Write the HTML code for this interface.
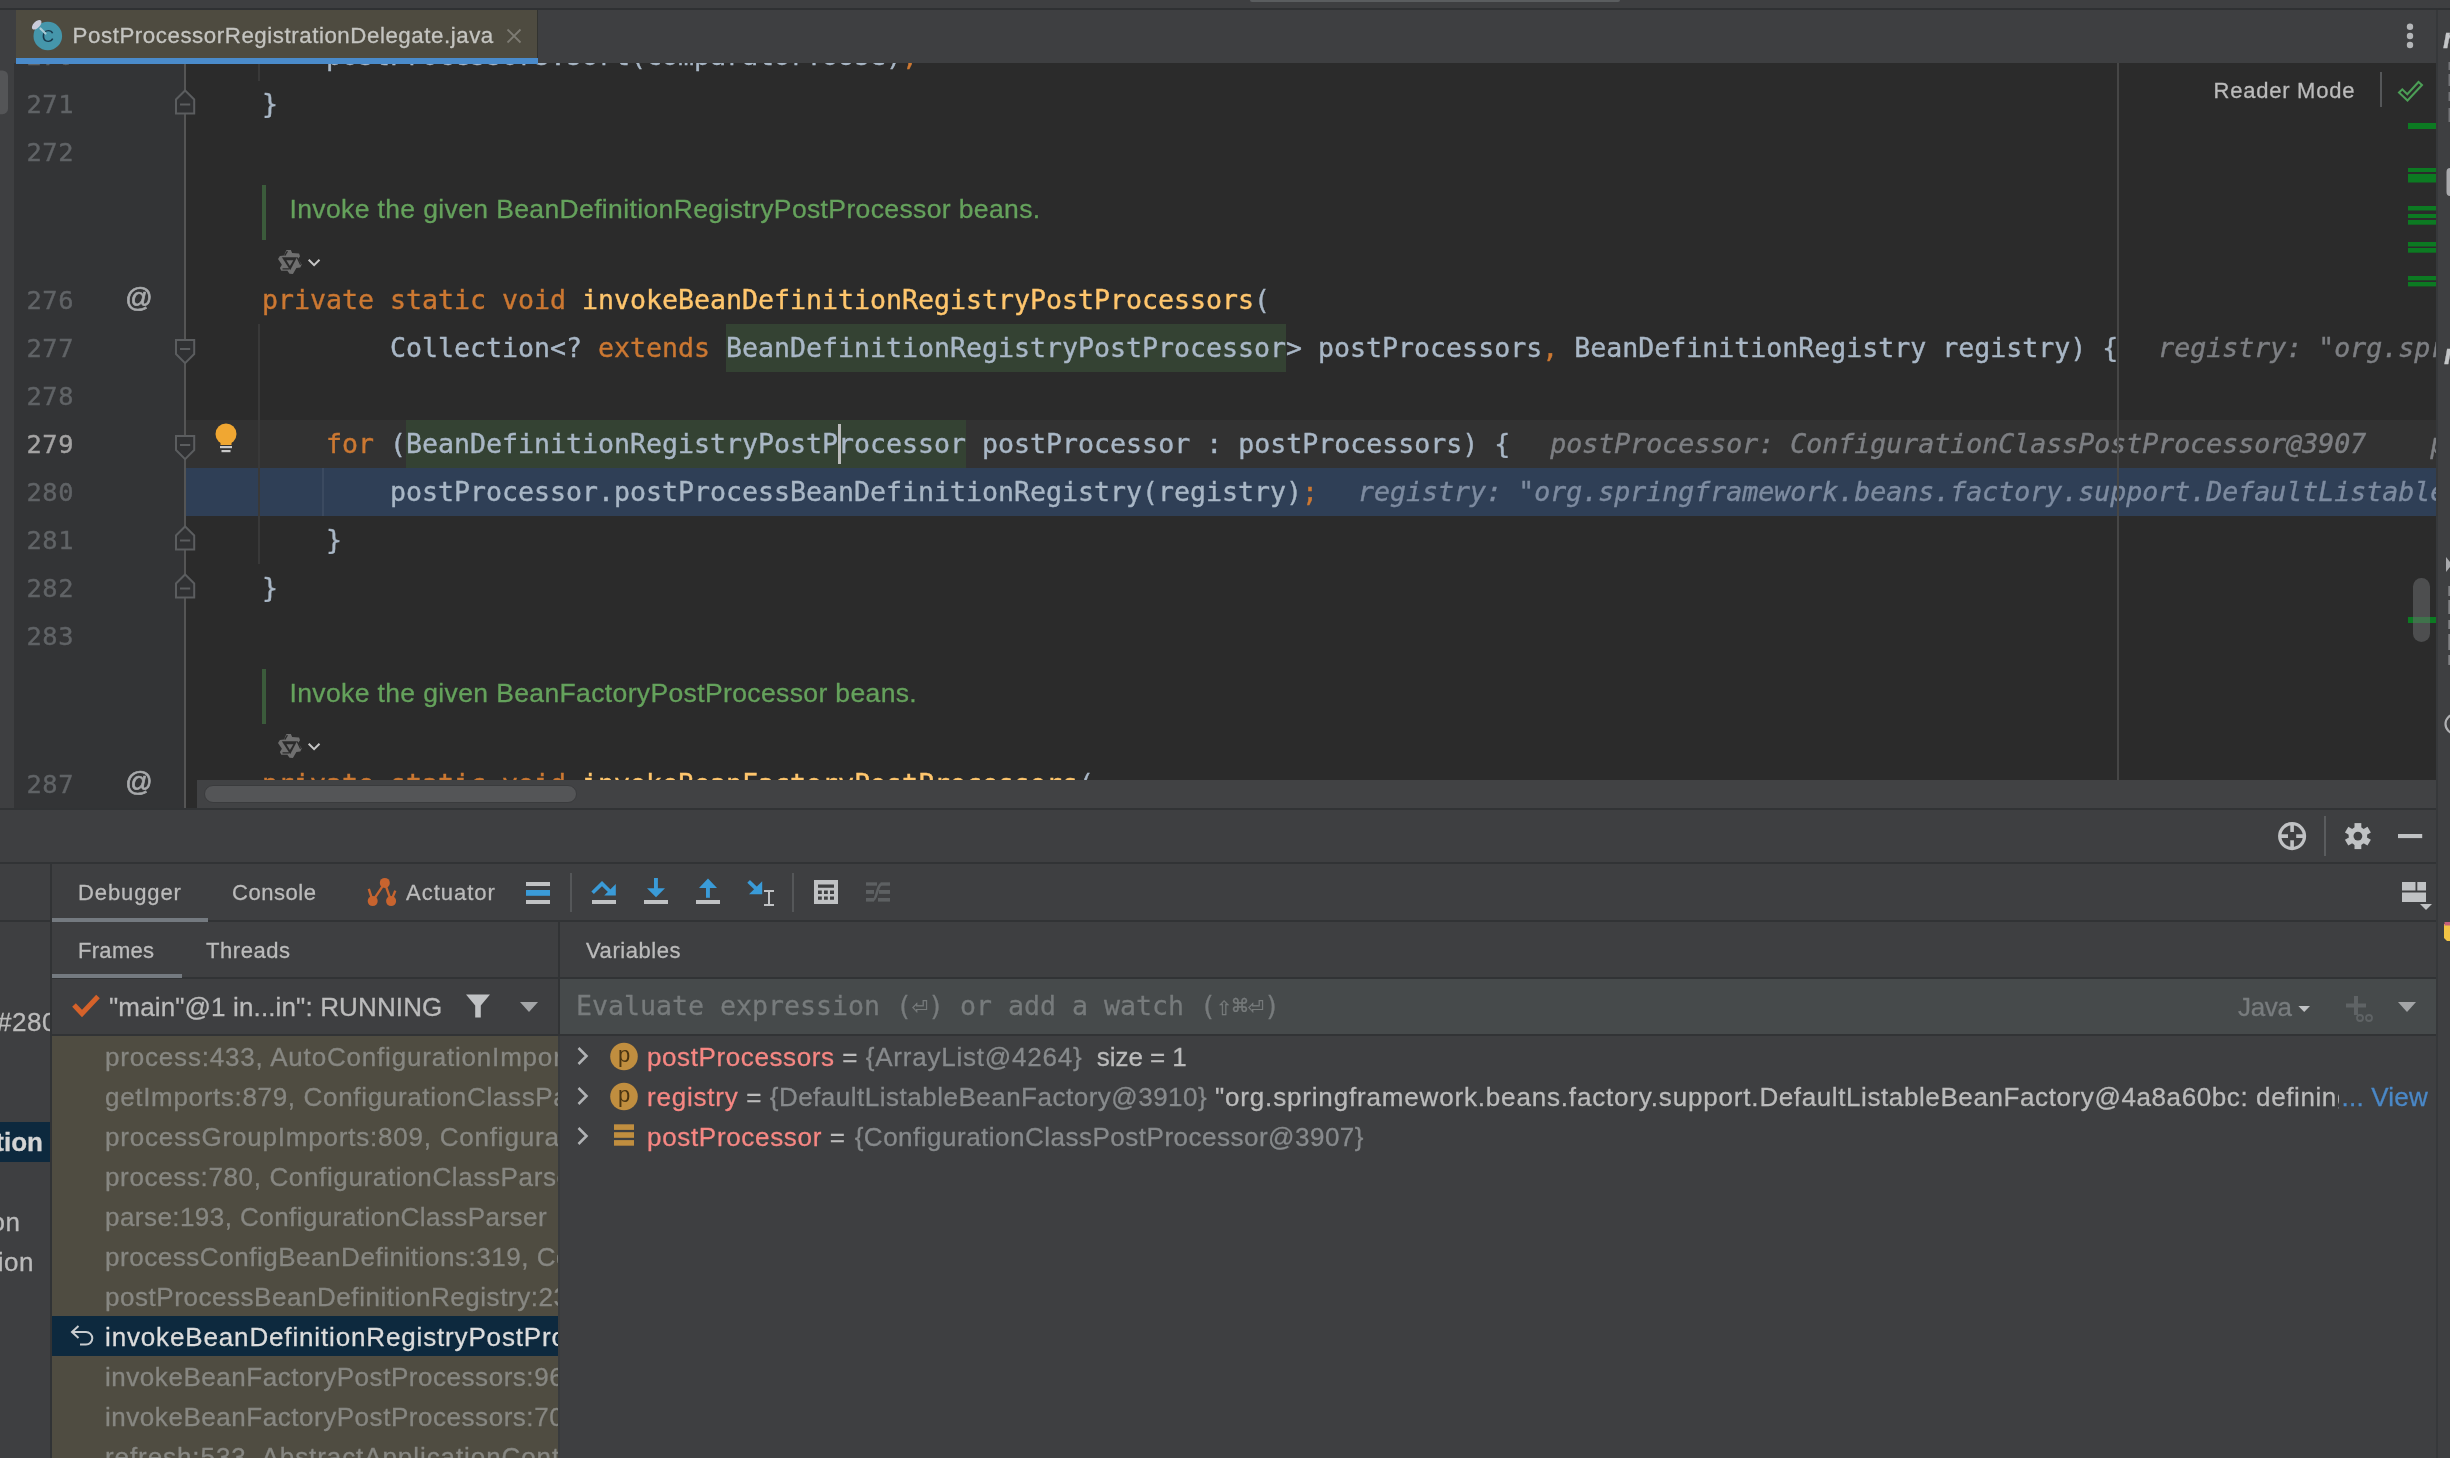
<!DOCTYPE html>
<html lang="en">
<head>
<meta charset="utf-8">
<title>PostProcessorRegistrationDelegate.java</title>
<style>
*{box-sizing:border-box;margin:0;padding:0}
html,body{width:2450px;height:1458px;overflow:hidden;background:#3e3f41}
body{position:relative;font-family:"Liberation Sans",sans-serif;color:#bbbbbb;-webkit-font-smoothing:antialiased;-webkit-text-stroke:0.3px}
.abs{position:absolute}
.ui{font-family:"Liberation Sans",sans-serif;white-space:pre;position:absolute}
.mono{font-family:"DejaVu Sans Mono","Liberation Mono",monospace;white-space:pre}
.cl,.ln{-webkit-text-stroke:0.4px}
/* ---------- editor ---------- */
#editor{position:absolute;left:15px;top:63px;width:2421px;height:745px;background:#2b2b2b;overflow:hidden}
#gutter{position:absolute;left:0;top:0;width:170px;height:745px;background:#333436}
#gutline{position:absolute;left:169px;top:0;width:2px;height:745px;background:#555555}
.ln{position:absolute;left:11.5px;width:60px;height:48px;line-height:49px;font-family:"DejaVu Sans Mono","Liberation Mono",monospace;font-size:25.4px;letter-spacing:0.55px;color:#606366;white-space:pre}
.cl{position:absolute;left:247px;height:48px;line-height:48px;font-family:"DejaVu Sans Mono","Liberation Mono",monospace;font-size:26.58px;color:#a9b7c6;white-space:pre}
.k{color:#cc7832}.m{color:#ffc66d}.h{color:#7d7f83;font-style:italic;margin-left:-8px}.hx{color:#7d8ba0;font-style:italic;margin-left:-8px}
.idh{background:#344233;display:inline-block;height:48px}
.doc{position:absolute;left:274.5px;font-size:26.5px;color:#65a25c;white-space:pre;letter-spacing:0.37px}

/* ---------- debug panel ---------- */
.hl{position:absolute;background:#313335;height:2px}
.vl{position:absolute;background:#313335;width:2px}
.t22{font-size:22px;line-height:40px;letter-spacing:0.6px;color:#bbbbbb}
.t26{font-size:26px;line-height:40px;letter-spacing:0.5px;color:#bbbbbb}
.fr{position:absolute;left:105px;font-size:26px;line-height:40px;letter-spacing:0.47px;color:#878782;white-space:pre;font-family:"Liberation Sans",sans-serif}
.vr{position:absolute;left:647px;font-size:26px;line-height:40px;letter-spacing:0.5px;color:#bbbbbb;white-space:pre;font-family:"Liberation Sans",sans-serif}
.vn{color:#f68783}.vg{color:#878a8c}
</style>
</head>
<body>
<div id="root" style="position:absolute;left:0;top:0;width:2450px;height:1458px;overflow:hidden;will-change:transform">
<!-- top strip -->
<div class="abs" style="left:0;top:0;width:2450px;height:9px;background:#3e3f41"></div>
<div class="abs" style="left:1250px;top:0;width:370px;height:2px;background:#5a5d5f;border-radius:0 0 3px 3px"></div>
<div class="abs" style="left:0;top:8.3px;width:2450px;height:1.4px;background:#2f3133"></div>
<!-- tab bar -->
<div id="tabbar" class="abs" style="left:0;top:10px;width:2436px;height:53px;background:#3e3f41"></div>
<div class="abs" style="left:16px;top:10px;width:521px;height:49px;background:#4e4b40"></div>
<div class="abs" style="left:537px;top:10px;width:1.3px;height:48px;background:#323330"></div>
<div class="abs" style="left:16px;top:57.6px;width:522px;height:6.4px;background:#4a8bcb;z-index:4"></div>
<div class="ui" style="left:72.6px;top:22.4px;font-size:22.3px;line-height:28px;color:#c4c4c0;letter-spacing:0.55px">PostProcessorRegistrationDelegate.java</div>

<div class="ui" style="left:2213.5px;top:70.5px;font-size:22px;line-height:40px;color:#bbbbbb;letter-spacing:0.76px;z-index:5">Reader Mode</div>
<!-- left strip -->
<div class="abs" style="left:0;top:63px;width:15px;height:745px;background:#3e3f41"></div>

<div class="abs" style="left:14.3px;top:63px;width:1px;height:745px;background:#333436"></div>
<!-- editor -->
<div id="editor">

  <!-- caret row + execution line -->
  <div class="abs" style="left:171px;top:357px;width:2250px;height:48px;background:#323232"></div>
  <div class="abs" style="left:171px;top:405px;width:2250px;height:48px;background:#2f3f56"></div>
  <!-- right margin -->
  <div class="abs" style="left:2102px;top:0;width:2px;height:717px;background:#464646;z-index:3"></div>
  <!-- indent guides -->
  <div class="abs" style="left:243px;top:0;width:2px;height:18px;background:#393939"></div>
  <div class="abs" style="left:243px;top:261px;width:2px;height:240px;background:#393939"></div>
  <div class="abs" style="left:307px;top:405px;width:2px;height:48px;background:#3b4a60"></div>
  <!-- code lines (top relative to editor: y-63) -->
  <div class="cl" style="top:-31px">    postProcessors.sort(comparatorToUse)<span class="k">;</span></div>
  <div class="cl" style="top:17px">}</div>
  <div class="cl" style="top:213px"><span class="k">private static void </span><span class="m">invokeBeanDefinitionRegistryPostProcessors</span>(</div>
  <div class="cl" style="top:261px">        Collection&lt;? <span class="k">extends </span><span class="idh">BeanDefinitionRegistryPostProcessor</span>&gt; postProcessors<span class="k">,</span> BeanDefinitionRegistry registry) {<span class="h">   registry: "org.springframework.beans.factory.support.DefaultListableBeanFactory@4a8a60bc"</span></div>
  <div class="cl" style="top:357px">    <span class="k">for </span>(<span class="idh">BeanDefinitionRegistryPostProcessor</span> postProcessor : postProcessors) {<span class="h">   postProcessor: ConfigurationClassPostProcessor@3907    postProcessors:  size = 1</span></div>
  <div class="cl" style="top:405px">        postProcessor.postProcessBeanDefinitionRegistry(registry)<span class="k">;</span><span class="hx">   registry: "org.springframework.beans.factory.support.DefaultListableBeanFactory@4a8a60bc: defining beans"</span></div>
  <div class="cl" style="top:453px">    }</div>
  <div class="cl" style="top:501px">}</div>
  <div class="cl" style="top:697px"><span class="k">private static void </span><span class="m">invokeBeanFactoryPostProcessors</span>(</div>
  <!-- caret -->
  <div class="abs" style="left:822.5px;top:361px;width:3.5px;height:40px;background:#bbbbbb"></div>
  <!-- rendered docs -->
  <div class="abs" style="left:247px;top:122px;width:4px;height:55px;background:#3b5b3b"></div>
  <div class="doc" style="top:129px;line-height:34px">Invoke the given BeanDefinitionRegistryPostProcessor beans.</div>
  <div class="abs" style="left:247px;top:606px;width:4px;height:55px;background:#3b5b3b"></div>
  <div class="doc" style="top:613px;line-height:34px">Invoke the given BeanFactoryPostProcessor beans.</div>
  <!-- gutter -->
  <div id="gutter"></div>
  <div id="gutline"></div>
  <div class="ln" style="top:-31px">270</div>
  <div class="ln" style="top:17px">271</div>
  <div class="ln" style="top:65px">272</div>
  <div class="ln" style="top:213px">276</div>
  <div class="ln" style="top:261px">277</div>
  <div class="ln" style="top:309px">278</div>
  <div class="ln" style="top:357px;color:#a4a3a3">279</div>
  <div class="ln" style="top:405px">280</div>
  <div class="ln" style="top:453px">281</div>
  <div class="ln" style="top:501px">282</div>
  <div class="ln" style="top:549px">283</div>
  <div class="ln" style="top:697px">287</div>
  <!-- horizontal scrollbar -->
  <div class="abs" style="left:182px;top:717px;width:2239px;height:28px;background:#414244"></div>
  <div class="abs" style="left:188.5px;top:722px;width:373px;height:18px;border-radius:9px;background:#545557;border:1.2px solid #3a3b3d"></div>
</div>


<!-- ================= debug tool window ================= -->
<div class="hl" style="left:0;top:808px;width:2436px"></div>
<div class="hl" style="left:0;top:862px;width:2436px"></div>
<div class="vl" style="left:50px;top:863px;height:595px"></div>
<div class="hl" style="left:0;top:920px;width:50px"></div>
<div class="hl" style="left:52px;top:920px;width:2384px"></div>
<div class="hl" style="left:52px;top:977px;width:2384px"></div>
<div class="hl" style="left:52px;top:1034px;width:2384px"></div>
<div class="vl" style="left:558px;top:922px;height:114px"></div>
<div class="vl" style="left:558px;top:1036px;height:422px;background:#393b3d"></div>
<!-- tab underlines -->
<div class="abs" style="left:52px;top:918px;width:156px;height:4px;background:#747a80"></div>
<div class="abs" style="left:52px;top:974px;width:130px;height:4px;background:#747a80"></div>
<!-- tabs -->
<div class="ui t22" style="left:78px;top:872.7px;letter-spacing:0.9px">Debugger</div>
<div class="ui t22" style="left:232px;top:872.7px;letter-spacing:0.55px">Console</div>
<div class="ui t22" style="left:406px;top:872.7px;letter-spacing:1px">Actuator</div>
<div class="ui t22" style="left:78px;top:930.7px;letter-spacing:0.3px">Frames</div>
<div class="ui t22" style="left:206px;top:930.7px;letter-spacing:0.55px">Threads</div>
<div class="ui t22" style="left:586px;top:930.7px;letter-spacing:0.55px">Variables</div>
<!-- thread selector -->
<div class="ui t26" style="left:109px;top:987px;letter-spacing:0.13px">"main"@1 in...in": RUNNING</div>
<!-- evaluate field -->
<div class="abs" style="left:560px;top:979px;width:1876px;height:55px;background:#464a4b"></div>
<div class="abs mono" style="left:576px;top:982px;font-size:26.58px;line-height:48px;color:#777b7c">Evaluate expression (&#x23CE;) or add a watch (&#x21E7;&#x2318;&#x23CE;)</div>
<div class="ui t26" style="left:2238px;top:987px;letter-spacing:-0.3px;color:#787c7e">Java</div>
<!-- frames list -->
<div class="abs" style="left:52px;top:1036px;width:506px;height:422px;background:#4f4c41;overflow:hidden">
</div>
<div class="abs" id="frames" style="left:52px;top:1036px;width:506px;height:422px;overflow:hidden">
  <div class="abs" style="left:0;top:280px;width:506px;height:40px;background:#0d293e"></div>
  <div class="fr" style="left:53px;top:1px;letter-spacing:0.81px">process:433, AutoConfigurationImportSelector$AutoConfigurationGroup</div>
  <div class="fr" style="left:53px;top:41px;letter-spacing:0.67px">getImports:879, ConfigurationClassParser$DeferredImportSelectorGrouping</div>
  <div class="fr" style="left:53px;top:81px;letter-spacing:0.79px">processGroupImports:809, ConfigurationClassParser$DeferredImportSelectorGroupingHandler</div>
  <div class="fr" style="left:53px;top:121px;letter-spacing:0.64px">process:780, ConfigurationClassParser$DeferredImportSelectorHandler</div>
  <div class="fr" style="left:53px;top:161px;letter-spacing:0.45px">parse:193, ConfigurationClassParser</div>
  <div class="fr" style="left:53px;top:201px;letter-spacing:0.54px">processConfigBeanDefinitions:319, ConfigurationClassPostProcessor</div>
  <div class="fr" style="left:53px;top:241px;letter-spacing:0.55px">postProcessBeanDefinitionRegistry:232, ConfigurationClassPostProcessor</div>
  <div class="fr" style="left:53px;top:281px;letter-spacing:0.85px;color:#dcdcdc">invokeBeanDefinitionRegistryPostProcessors:280, PostProcessorRegistrationDelegate</div>
  <div class="fr" style="left:53px;top:321px;letter-spacing:0.54px">invokeBeanFactoryPostProcessors:96, PostProcessorRegistrationDelegate</div>
  <div class="fr" style="left:53px;top:361px;letter-spacing:0.54px">invokeBeanFactoryPostProcessors:707, AbstractApplicationContext</div>
  <div class="fr" style="left:53px;top:401px;letter-spacing:0.92px">refresh:533, AbstractApplicationContext</div>
</div>
<!-- variables -->
<div class="vr" style="top:1037px"><span class="vn" style="letter-spacing:0.6px">postProcessors</span> = <span class="vg" style="letter-spacing:0.78px">{ArrayList@4264}</span><span style="letter-spacing:-0.05px">  size = 1</span></div>
<div class="abs" style="left:647px;top:1077px;width:1692px;height:40px;overflow:hidden"><div class="vr" style="left:0;top:0"><span class="vn" style="letter-spacing:0.79px">registry</span> = <span class="vg">{DefaultListableBeanFactory@3910}</span> <span style="letter-spacing:0.83px">"org.springframework.beans.factory.support.</span><span style="letter-spacing:0.6px">DefaultListableBeanFactory@4a8a60bc: defining beans [org.springframework.context.annotation</span></div></div>
<div class="vr" style="left:2341.5px;top:1077px;color:#4a88c7;letter-spacing:0.22px">... View</div>
<div class="vr" style="top:1117px"><span class="vn" style="letter-spacing:0.68px">postProcessor</span> = <span class="vg" style="letter-spacing:0.5px;margin-left:1.5px">{ConfigurationClassPostProcessor@3907}</span></div>
<!-- left column -->
<div class="abs" id="leftcol" style="left:0;top:863px;width:50px;height:595px;overflow:hidden">
  <div class="abs" style="left:0;top:259px;width:50px;height:40px;background:#0d293e"></div>
  <div class="ui t26" style="left:-3px;top:139px">#280</div>
  <div class="ui t26" style="right:7px;top:259px;font-weight:bold;color:#d4d4d4;letter-spacing:0">tion</div>
  <div class="ui t26" style="right:29.5px;top:339px">on</div>
  <div class="ui t26" style="right:16px;top:379px">ion</div>
</div>

<!-- right strip -->
<div class="abs" id="rstrip" style="left:2436px;top:10px;width:14px;height:1448px;background:#3e3f41;overflow:hidden">
  <div class="abs" style="left:0;top:0;width:2px;height:1448px;background:#36383a"></div>
  <div class="ui" style="left:7px;top:14px;font-size:27px;line-height:30px;font-weight:bold;font-style:italic;color:#c4c6c8">m</div>
  <div class="ui" style="left:8px;top:330px;font-size:27px;line-height:30px;font-weight:bold;font-style:italic;color:#c4c6c8">m</div>
</div>

<!-- ================= icon overlay ================= -->
<svg class="abs" style="left:0;top:0;pointer-events:none" width="2450" height="1458" viewBox="0 0 2450 1458">
<!-- tab: class icon -->
<g id="ic-class">
  <circle cx="47.8" cy="36" r="14.3" fill="#4596ab"/>
  <text x="47.8" y="42.3" text-anchor="middle" font-family="Liberation Sans, sans-serif" font-size="17" fill="#17384c">C</text>
  <path d="M40.5 28.5 L45.5 33.5" stroke="#a9cbd6" stroke-width="2.2" stroke-linecap="round"/>
  <ellipse cx="36.7" cy="24.8" rx="6" ry="3.2" transform="rotate(-45 36.7 24.8)" fill="#c9cbd9"/>
</g>
<!-- tab close -->
<path d="M507.5 29.5 L520.5 42.5 M520.5 29.5 L507.5 42.5" stroke="#7d7b73" stroke-width="1.8" fill="none"/>
<!-- tab bar dots -->
<g fill="#b4b6b8"><circle cx="2410" cy="26.7" r="3.2"/><circle cx="2410" cy="36" r="3.2"/><circle cx="2410" cy="45" r="3.2"/></g>
<!-- reader mode separator + check -->
<rect x="2380" y="72" width="2" height="35" fill="#555759"/>
<path d="M2399 92.5 L2407.5 100.5 L2422 85 L2418.5 82 L2407.3 94.2 L2402.3 89.3 Z" fill="none" stroke="#4c9e56" stroke-width="2" stroke-linejoin="miter"/>
<!-- fold markers -->
<g fill="#303133" stroke="#5b5d5f" stroke-width="2" stroke-linejoin="miter">
  <path d="M176 113.6 L176 99.5 L185.1 90.5 L194.2 99.5 L194.2 113.6 Z"/>
  <path d="M176 340 L194.2 340 L194.2 354 L185.1 363.2 L176 354 Z"/>
  <path d="M176 436 L194.2 436 L194.2 450 L185.1 459.2 L176 450 Z"/>
  <path d="M176 549.6 L176 535.5 L185.1 526.5 L194.2 535.5 L194.2 549.6 Z"/>
  <path d="M176 597.6 L176 583.5 L185.1 574.5 L194.2 583.5 L194.2 597.6 Z"/>
</g>
<g stroke="#5b5d5f" stroke-width="2">
  <path d="M180 104.6 H190.2 M180 349 H190.2 M180 445 H190.2 M180 540.6 H190.2 M180 588.6 H190.2"/>
</g>
<!-- gutter @ -->
<text x="139" y="307.2" text-anchor="middle" font-family="Liberation Sans, sans-serif" font-size="27" fill="#a9abad" stroke="#a9abad" stroke-width="0.7">@</text>
<text x="139" y="791.2" text-anchor="middle" font-family="Liberation Sans, sans-serif" font-size="27" fill="#a9abad" stroke="#a9abad" stroke-width="0.7">@</text>
<!-- left strip handle -->
<rect x="-8" y="70.4" width="16" height="43.8" rx="5.5" fill="#545557"/>
<!-- bulb -->
<g id="ic-bulb">
  <circle cx="226" cy="434" r="10.5" fill="#f0a732"/>
  <path d="M220.5 440 L231.5 440 L231.5 445 L220.5 445 Z" fill="#f0a732"/>
  <rect x="220" y="446" width="12" height="2.2" fill="#c9c9c9"/>
  <rect x="221.5" y="450" width="9" height="2.2" fill="#c9c9c9"/>
</g>

<!-- doc render icons -->
<g>
  <polygon points="286.4,250.1 290.9,250.1 292.1,253.0 299.1,253.5 300.0,256.3 298.1,259.0 301.7,264.5 300.3,267.6 296.4,267.9 292.9,274.1 289.5,273.8 287.4,270.7 281.3,270.7 279.9,267.9 281.9,264.8 278.0,259.0 279.9,255.9 284.0,255.6" fill="#6f6f6f"/>
  <polygon points="281.9,257.3 297.0,257.3 290.2,270.3" fill="#2b2b2b"/>
  <polygon points="286.4,260.2 293.4,260.2 289.9,266.0" fill="#6f6f6f"/>
  <path d="M297.2 257.5 L300.6 264.8 M282.5 268.8 L289.1 268.8 M287.4 251.1 L284.7 255.6" stroke="#2b2b2b" stroke-width="1.3" fill="none"/>
  <path d="M308.7 259.7 L314.1 265.1 L319.5 259.7" stroke="#c6c6c6" stroke-width="2" fill="none"/>
</g>
<g>
  <polygon points="286.4,734.1 290.9,734.1 292.1,737.0 299.1,737.5 300.0,740.3 298.1,743.0 301.7,748.5 300.3,751.6 296.4,751.9 292.9,758.1 289.5,757.8 287.4,754.7 281.3,754.7 279.9,751.9 281.9,748.8 278.0,743.0 279.9,739.9 284.0,739.6" fill="#6f6f6f"/>
  <polygon points="281.9,741.3 297.0,741.3 290.2,754.3" fill="#2b2b2b"/>
  <polygon points="286.4,744.2 293.4,744.2 289.9,750.0" fill="#6f6f6f"/>
  <path d="M297.2 741.5 L300.6 748.8 M282.5 752.8 L289.1 752.8 M287.4 735.1 L284.7 739.6" stroke="#2b2b2b" stroke-width="1.3" fill="none"/>
  <path d="M308.7 743.7 L314.1 749.1 L319.5 743.7" stroke="#c6c6c6" stroke-width="2" fill="none"/>
</g>
<!-- error stripe marks -->
<g fill="#0c7a22">
  <rect x="2408" y="123" width="28" height="6"/>
  <rect x="2408" y="168" width="28" height="4"/><rect x="2408" y="174" width="28" height="8.5"/>
  <rect x="2408" y="206" width="28" height="4.5"/><rect x="2408" y="214" width="28" height="4"/><rect x="2408" y="220" width="28" height="4.7"/>
  <rect x="2408" y="242" width="28" height="4.5"/><rect x="2408" y="248" width="28" height="4.7"/>
  <rect x="2408" y="276" width="28" height="4.3"/><rect x="2408" y="282" width="28" height="4.4"/>
  <rect x="2408" y="617" width="28" height="6"/>
</g>
<!-- vertical scrollbar thumb -->
<rect x="2413" y="578" width="17" height="64" rx="8.5" fill="#6a6c6e" fill-opacity="0.55"/>
<!-- right strip slivers -->
<g fill="#c4c6c8">
  <path d="M2446 557 L2450 562 V567 L2446 572 Z" opacity="0.8"/>
  <rect x="2448.3" y="586" width="1.7" height="10" opacity="0.5"/><rect x="2448.3" y="600" width="1.7" height="14" opacity="0.5"/><rect x="2448.3" y="620" width="1.7" height="9" opacity="0.5"/><rect x="2448.3" y="634" width="1.7" height="16" opacity="0.5"/><rect x="2448.3" y="655" width="1.7" height="10" opacity="0.5"/>
  <rect x="2448.5" y="62" width="1.5" height="8" opacity="0.4"/><rect x="2448.5" y="74" width="1.5" height="12" opacity="0.4"/><rect x="2448.5" y="92" width="1.5" height="9" opacity="0.4"/><rect x="2448.5" y="108" width="1.5" height="14" opacity="0.4"/>
  <path d="M2446.5 172 Q2446.5 168 2450 168 V196 Q2446.5 196 2446.5 192 Z" opacity="0.8"/>
</g>
<circle cx="2455" cy="724" r="9.5" fill="none" stroke="#c4c6c8" stroke-width="2.2" opacity="0.85"/>
<path d="M2444 924 L2450 924 V941 L2447 941 L2444 938 Z" fill="#f2c445"/><path d="M2444.5 922 H2450 V925.5 H2444.5 Z" fill="#c4607a"/>
<!-- debug header icons -->
<g id="ic-target" stroke="#c0c2c4" fill="none">
  <circle cx="2292.1" cy="836.1" r="12.4" stroke-width="3.3"/>
  <path d="M2292.1 824 V832 M2292.1 840.2 V848.2 M2280 836.1 H2288 M2296.2 836.1 H2304.2" stroke-width="3.6"/>
</g>
<rect x="2324" y="816" width="2" height="40" fill="#5a5c5e"/>
<g id="ic-gear" transform="translate(2357.9 836.1)" fill="#c0c2c4">
  <circle r="9.3"/>
  <g id="teeth"><rect x="-3.4" y="-13" width="6.8" height="26"/><rect x="-3.4" y="-13" width="6.8" height="26" transform="rotate(60)"/><rect x="-3.4" y="-13" width="6.8" height="26" transform="rotate(120)"/></g>
  <circle r="4.4" fill="#3e3f41"/>
</g>
<rect x="2398" y="834" width="24.2" height="4.1" fill="#c0c2c4"/>
<!-- layout icon -->
<g fill="#c0c2c4"><rect x="2402" y="882" width="13.5" height="8.5"/><rect x="2417.3" y="882" width="8.7" height="8.5"/><rect x="2402" y="892.5" width="24" height="9.5"/><path d="M2420 904 H2432 L2426 910 Z"/></g>
<!-- actuator -->
<g id="ic-actuator" fill="#c8642f" stroke="#c8642f">
  <circle cx="384.8" cy="882.9" r="5" stroke="none"/><circle cx="372.7" cy="901.1" r="5" stroke="none"/><circle cx="391.1" cy="901.1" r="5" stroke="none"/>
  <path d="M372.7 901.1 L384.8 882.9 L391.1 901.1 M368.8 888.9 L372.7 901.1 M395.3 890.6 L391.1 901.1" fill="none" stroke-width="2.4"/>
</g>
<!-- show exec point / hamburger -->
<rect x="526" y="882" width="24" height="4" fill="#c0c2c4"/><rect x="526" y="890" width="24" height="5.8" fill="#3a9bd8"/><rect x="526" y="900" width="24" height="4" fill="#c0c2c4"/>
<rect x="570" y="873" width="2" height="39" fill="#555759"/>
<!-- step over -->
<path d="M592.6 892.8 L602 883.6 L610 891.5" fill="none" stroke="#3a9bd8" stroke-width="3.6" stroke-linejoin="miter"/>
<path d="M615.8 884 V895.6 H604.2 Z" fill="#3a9bd8"/>
<rect x="592" y="900" width="24" height="4" fill="#c0c2c4"/>
<!-- step into -->
<rect x="654" y="878" width="3.9" height="11" fill="#3a9bd8"/><path d="M647 888.2 H665 L656 897.3 Z" fill="#3a9bd8"/>
<rect x="644" y="900" width="24" height="4" fill="#c0c2c4"/>
<!-- step out -->
<rect x="706" y="887" width="3.9" height="10.8" fill="#3a9bd8"/><path d="M699 888 H717 L708 878.6 Z" fill="#3a9bd8"/>
<rect x="696" y="900" width="24" height="4" fill="#c0c2c4"/>
<!-- run to cursor -->
<path d="M748.6 881.4 L758 890.4" stroke="#3a9bd8" stroke-width="3.8" fill="none"/>
<path d="M762.2 881.2 V894.2 H749 Z" fill="#3a9bd8"/>
<path d="M764 891 H774 M764 905 H774 M769 891 V905" stroke="#c0c2c4" stroke-width="2" fill="none"/>
<rect x="792" y="873" width="2" height="39" fill="#555759"/>
<!-- calculator -->
<path fill="#c0c2c4" fill-rule="evenodd" d="M814 880 H838 V904 H814 Z M818 884.5 H834 V887.8 H818 Z M818 890.6 H821.8 V893.9 H818 Z M824 890.6 H827.8 V893.9 H824 Z M830 890.6 H834 V893.9 H830 Z M818 896.4 H821.8 V899.7 H818 Z M824 896.4 H827.8 V899.7 H824 Z M830 896.4 H834 V899.7 H830 Z"/>
<!-- trace (disabled) -->
<g fill="#5d6062"><rect x="866" y="882.3" width="11" height="3.4"/><rect x="880.5" y="882.3" width="9.5" height="3.4"/><rect x="866" y="890" width="8" height="3.9"/><rect x="879" y="890" width="11" height="3.9"/><rect x="866" y="898" width="8" height="3.6"/><rect x="878" y="898" width="12" height="3.6"/></g>
<path d="M873 900 C877 900 877 884 882 884" stroke="#5d6062" stroke-width="2.6" fill="none"/>
<!-- thread check -->
<path d="M74 1005 L82 1013.5 L98 996.5" stroke="#d5622a" stroke-width="5" fill="none" stroke-linejoin="miter"/>
<!-- filter -->
<path d="M466 994.5 H490 L480.8 1005.5 V1017.5 H475.2 V1005.5 Z" fill="#c0c2c4"/>
<path d="M520 1002 H538 L529 1012 Z" fill="#a3a5a7"/>
<!-- java arrow, add watch, dropdown -->
<path d="M2298.4 1006 H2310 L2304.2 1012 Z" fill="#c0c2c4"/>
<g stroke="#5f6365" fill="none"><path d="M2356 996 V1015 M2346 1005.5 H2366" stroke-width="4"/><circle cx="2360" cy="1018" r="3" stroke-width="1.8"/><circle cx="2369" cy="1018" r="3" stroke-width="1.8"/></g>
<path d="M2398 1002 H2416 L2407 1012 Z" fill="#a3a5a7"/>
<!-- frames: return arrow -->
<path d="M78.5 1326 L72 1332 L78.5 1338 M72.5 1332 H86 A6.3 6.3 0 0 1 86 1344.6 H80" stroke="#c9cdd0" stroke-width="2" fill="none"/>
<!-- variables: chevrons -->
<g stroke="#b0b2b4" stroke-width="2.6" fill="none"><path d="M578.5 1048 L586.5 1056 L578.5 1064"/><path d="M578.5 1088 L586.5 1096 L578.5 1104"/><path d="M578.5 1128 L586.5 1136 L578.5 1144"/></g>
<!-- p icons -->
<g><circle cx="624" cy="1056.5" r="13.8" fill="#c08e3f"/><circle cx="624" cy="1096.5" r="13.8" fill="#c08e3f"/>
<text x="624" y="1061.7" text-anchor="middle" font-family="Liberation Sans, sans-serif" font-size="22" fill="#4a3512">p</text>
<text x="624" y="1101.7" text-anchor="middle" font-family="Liberation Sans, sans-serif" font-size="22" fill="#4a3512">p</text></g>
<g fill="#c08e3f"><rect x="614" y="1124.3" width="20" height="5.6"/><rect x="614" y="1132.2" width="20" height="5.6"/><rect x="614" y="1140.1" width="20" height="5.6"/></g>
</svg>
</div>
</body>
</html>
